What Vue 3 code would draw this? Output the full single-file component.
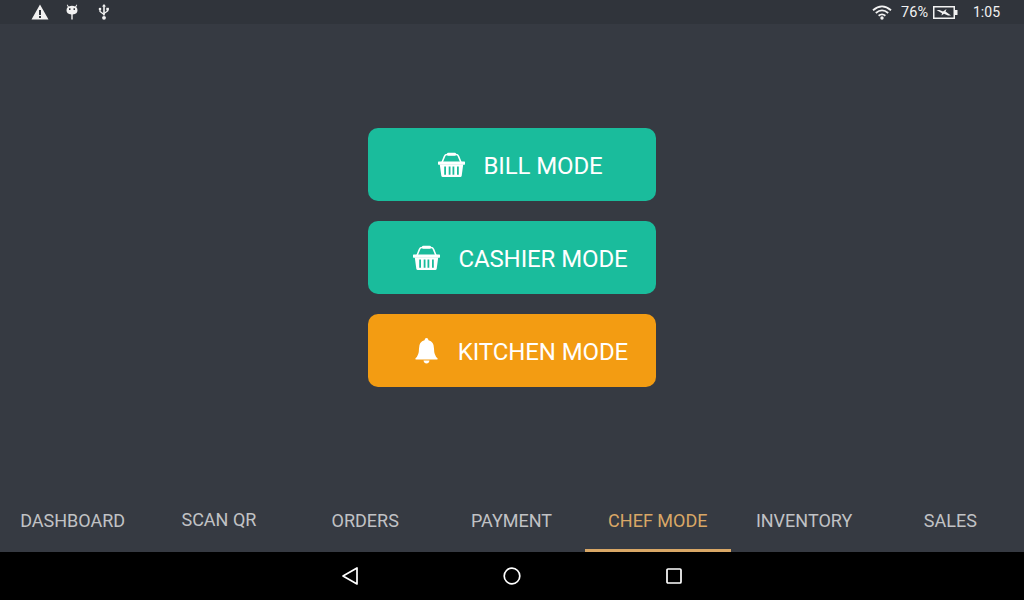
<script setup>
const modes = [
  { label: 'BILL MODE', icon: 'basket', cls: 'teal' },
  { label: 'CASHIER MODE', icon: 'basket', cls: 'teal' },
  { label: 'KITCHEN MODE', icon: 'bell', cls: 'orange' },
]
const tabs = ['DASHBOARD', 'SCAN QR', 'ORDERS', 'PAYMENT', 'CHEF MODE', 'INVENTORY', 'SALES']
</script>

<template>
  <div class="screen">
    <header class="status">
      <div class="status-left">
        <svg class="warn" width="18" height="16" viewBox="0 0 18 16">
          <path fill="#f2f2f2" fill-rule="evenodd" d="M9 .5 17.500 15.500H.5ZM8 6v5h2V6ZM8 12v2h2v-2Z" />
        </svg>
        <svg class="droid" width="12" height="16" viewBox="0 0 12 16">
          <path fill="#f2f2f2" fill-rule="evenodd" d="M1.400 .6 2.800 2.400Q6 1.200 9.200 2.400L10.600 .6 11.200 1.100 10.200 3Q11.500 4.200 11.500 6.300 11.500 10 6.700 10.600V15.500H5.300V10.600Q.5 10 .5 6.300.5 4.200 1.800 3L.8 1.100ZM3 4.300V6H4.500V4.300ZM7.500 4.300V6H9V4.300Z" />
        </svg>
        <svg class="usb" width="12" height="16" viewBox="0 0 12 16">
          <g fill="#f2f2f2">
            <path d="M6 0 8 2.600H6.800V11.500H5.200V2.600H4Z" />
            <circle cx="6" cy="13.800" r="1.900" />
            <rect x="8.300" y="3.800" width="2.600" height="2.600" />
            <circle cx="2" cy="5" r="1.300" />
          </g>
          <path fill="none" stroke="#f2f2f2" stroke-width="1.300" d="M2 5.500V7.500L6 10.500M9.600 6V7L6 9.500" />
        </svg>
      </div>
      <div class="status-right">
        <svg class="wifi" width="20" height="15" viewBox="0 0 20 15">
          <g fill="none" stroke="#f2f2f2" stroke-width="1.800">
            <path d="M1 5.200Q10-2.500 19 5.200" />
            <path d="M3.800 8Q10 2.800 16.200 8" />
            <path d="M6.600 10.800Q10 8 13.400 10.800" />
          </g>
          <circle cx="10" cy="13" r="1.700" fill="#f2f2f2" />
        </svg>
        <span class="pct">76%</span>
        <svg class="battery" width="25" height="13" viewBox="0 0 25 13">
          <rect x=".75" y=".75" width="20.500" height="11.500" fill="none" stroke="#f2f2f2" stroke-width="1.500" />
          <rect x="22" y="4" width="2.500" height="5" fill="#f2f2f2" />
          <path fill="#f2f2f2" d="M3.500 4H6.500L10 5.500 13.500 3 12.500 5.500 18 9.500H15L11 7.800 8.500 9.500 9 7.300Z" />
        </svg>
        <span class="clock">1:05</span>
      </div>
    </header>

    <main class="main">
      <button v-for="m in modes" :key="m.label" class="mode" :class="m.cls">
        <svg v-if="m.icon === 'basket'" class="mode-icon" width="27" height="26" viewBox="0 0 27 26">
          <path fill="none" stroke="#fff" stroke-width="1.600" d="M4 10.500 6.500 4.200Q7.200 2.500 9 2.500H18Q19.800 2.500 20.500 4.200L23 10.500" />
          <rect x="9" y=".8" width="9" height="3" rx="1.300" fill="#fff" />
          <rect x="0" y="9.500" width="27" height="3.200" rx=".6" fill="#fff" />
          <path fill="#fff" fill-rule="evenodd" d="M1.800 12.500H25.200L23.700 23.800Q23.500 25 22.200 25H4.800Q3.500 25 3.300 23.800ZM6.200 14.500V22.800H8V14.500ZM10.700 14.500V22.800H12.500V14.500ZM14.500 14.500V22.800H16.300V14.500ZM19 14.500V22.800H20.800V14.500Z" />
        </svg>
        <svg v-else class="mode-icon" width="27" height="26" viewBox="0 0 27 26">
          <path fill="#fff" d="M13.500 0Q15.200 0 15.500 2.300 21 3.600 21 10.500 21 17.500 24.500 20.200 25 21.500 24 21.500H3Q2 21.500 2.500 20.200 6 17.500 6 10.500 6 3.600 11.500 2.300 11.800 0 13.500 0Z" />
          <path fill="#fff" d="M10.500 22.500H16.500Q16 25.500 13.500 25.500 11 25.500 10.500 22.500Z" />
        </svg>
        <span class="mode-label">{{ m.label }}</span>
      </button>
    </main>

    <nav class="tabs">
      <div v-for="t in tabs" :key="t" class="tab" :class="{ active: t === 'CHEF MODE' }">{{ t }}</div>
    </nav>

    <footer class="nav">
      <svg width="18" height="20" viewBox="0 0 18 20">
        <path fill="none" stroke="#fff" stroke-width="1.700" stroke-linejoin="round" d="M16 2V18L2 10Z" />
      </svg>
      <svg width="18" height="18" viewBox="0 0 18 18">
        <circle cx="9" cy="9" r="7.800" fill="none" stroke="#fff" stroke-width="1.700" />
      </svg>
      <svg width="16" height="16" viewBox="0 0 16 16">
        <rect x="1" y="1" width="14" height="14" rx="1" fill="none" stroke="#fff" stroke-width="1.700" />
      </svg>
    </footer>
  </div>
</template>

<style>
html, body { margin: 0; background: #000; }
</style>

<style scoped>
.screen {
  width: 1024px;
  height: 600px;
  display: flex;
  flex-direction: column;
  background: #363a42;
  font-family: Roboto, "Liberation Sans", sans-serif;
  overflow: hidden;
}
.status {
  height: 24px;
  flex: none;
  background: #30343b;
  display: flex;
  justify-content: space-between;
  align-items: center;
  padding: 0 24px 0 31px;
  color: #f2f2f2;
  font-size: 14px;
}
.status-left { display: flex; align-items: center; }
.warn { margin-right: 17px; }
.droid { margin-right: 20px; }
.status-right { display: flex; align-items: center; }
.wifi { margin-right: 9px; }
.pct { margin-right: 5px; font-size: 14.5px; }
.battery { margin-right: 15px; }
.main {
  flex: 1;
  display: flex;
  flex-direction: column;
  align-items: center;
  justify-content: center;
  gap: 20px;
}
.mode {
  width: 288px;
  height: 73px;
  border: 0;
  border-radius: 10px;
  color: #fff;
  font: inherit;
  font-size: 24px;
  letter-spacing: -0.1px;
  padding: 0 0 0 17px;
  display: flex;
  align-items: center;
  justify-content: center;
  gap: 18px;
}
.mode-icon { flex: none; }
.mode-label { padding-top: 2px; }
.teal { background: #1abc9c; }
.orange { background: #f39c12; }
.tabs {
  height: 61px;
  flex: none;
  display: grid;
  grid-template-columns: repeat(7, 1fr);
}
.tab {
  display: flex;
  align-items: center;
  justify-content: center;
  padding-right: 1px;
  font-size: 18px;
  color: #c1c2c5;
  border-bottom: 3px solid transparent;
}
.tab:nth-child(2) { padding-bottom: 2px; }
.tab.active {
  color: #d9a766;
  border-bottom-color: #d9a766;
}
.nav {
  height: 48px;
  flex: none;
  background: #000;
  display: grid;
  grid-template-columns: repeat(3, 162px);
  justify-content: center;
  justify-items: center;
  align-items: center;
}
</style>
